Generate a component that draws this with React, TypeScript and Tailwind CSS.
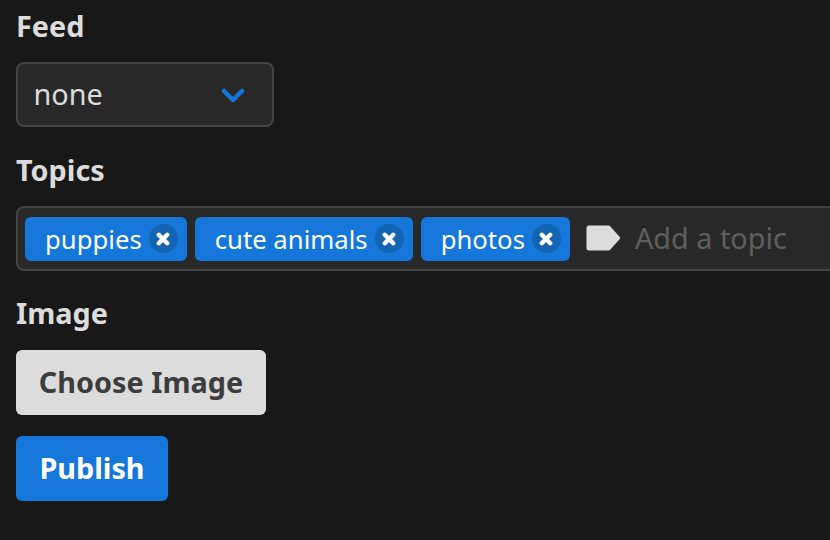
import React from 'react';

const TagIcon = () => (
  <svg width="35" height="26" viewBox="0 0 35 26" className="shrink-0 relative -top-px">
    <path d="M3 0.5h19.5a2 2 0 0 1 1.6 0.8L33.8 12a1.5 1.5 0 0 1 0 2L24.1 24.7a2 2 0 0 1-1.6 0.8H3a2.5 2.5 0 0 1-2.5-2.5V3A2.5 2.5 0 0 1 3 0.5z" fill="#dcdcdc" />
  </svg>
);

const RemoveIcon = () => (
  <span className="w-[29px] h-[29px] rounded-full bg-[#1464b4] flex items-center justify-center shrink-0">
    <svg width="14" height="14" viewBox="0 0 14 14">
      <path d="M2.8 2.8l8.4 8.4M11.2 2.8l-8.4 8.4" stroke="#fff" strokeWidth="4.4" strokeLinecap="round" />
    </svg>
  </span>
);

const Tag = ({ label }: { label: string }) => (
  <div className="h-11 flex items-center pl-5 pr-[9px] rounded-md bg-[#1477d9] text-white gap-[7px]">
    <span className="relative top-[2px]">{label}</span>
    <RemoveIcon />
  </div>
);

export default function App() {
  return (
    <div className="w-[830px] h-[540px] overflow-hidden bg-[#181818] text-[#dcdcdc] text-[25.7px] font-['Noto_Sans',sans-serif] pl-4 pt-[6px]">
      <label className="block text-[28.8px] leading-[40px] font-bold">Feed</label>
      <div className="mt-4 w-[258px] h-[65px] rounded-lg border-2 border-[#444444] bg-[#282828] flex items-center justify-between pl-[15.5px] pr-[27px] text-[28.8px]">
        <span className="relative -top-px">none</span>
        <svg width="24" height="16" viewBox="0 0 24 16" fill="none" className="relative top-px">
          <path d="M3 3l9 9 9-9" stroke="#1477d9" strokeWidth="4.5" strokeLinecap="round" strokeLinejoin="round" />
        </svg>
      </div>

      <label className="block mt-[23px] text-[28.8px] leading-[40px] font-bold">Topics</label>
      <div className="mt-4 w-[900px] h-[65px] rounded-lg border-2 border-[#444444] bg-[#282828] flex items-center pl-[7px] gap-2">
        <Tag label="puppies" />
        <Tag label="cute animals" />
        <Tag label="photos" />
        <div className="flex items-center gap-[14px] ml-2 text-[#5f5f5f] text-[28.8px]">
          <TagIcon />
          <span className="relative -top-px">Add a topic</span>
        </div>
      </div>

      <label className="block mt-[22px] text-[28.8px] leading-[40px] font-bold">Image</label>
      <button className="block mt-[17px] w-[250px] h-[65px] pb-[2px] rounded-md bg-[#dcdcdc] text-[#3c3c3c] text-[28.8px] font-bold">Choose Image</button>
      <button className="block mt-[21px] w-[152px] h-[65px] pb-[2px] rounded-md bg-[#1477d9] text-white text-[28.8px] font-bold">Publish</button>
    </div>
  );
}
